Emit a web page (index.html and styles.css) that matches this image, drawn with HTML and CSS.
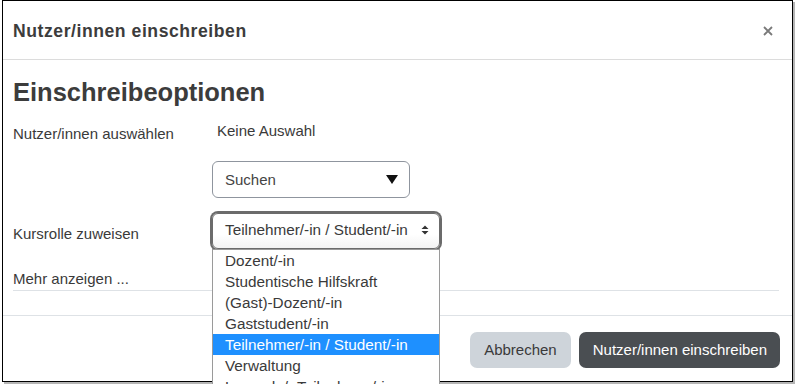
FILE: index.html
```html
<!DOCTYPE html>
<html lang="de">
<head>
<meta charset="utf-8">
<title>Nutzer/innen einschreiben</title>
<link rel="stylesheet" href="styles.css">
</head>
<body>
<div class="modal">
  <div class="modal-header">
    <h5 class="modal-title">Nutzer/innen einschreiben</h5>
    <span class="close" aria-label="Schließen">
      <svg width="10" height="10" viewBox="0 0 10 10"><path d="M1 1L9 9M9 1L1 9" stroke="#7a7a7a" stroke-width="1.8" fill="none"/></svg>
    </span>
  </div>
  <div class="modal-body">
    <h3 class="section-title">Einschreibeoptionen</h3>
    <div class="form-row row-users">
      <div class="label">Nutzer/innen auswählen</div>
      <div class="control">
        <div class="selection">Keine Auswahl</div>
        <div class="search-box">
          <span>Suchen</span>
          <svg class="down" width="12" height="9" viewBox="0 0 12 9"><path d="M0 0H12L6 9Z" fill="#111"/></svg>
        </div>
      </div>
    </div>
    <div class="form-row row-role">
      <div class="label">Kursrolle zuweisen</div>
      <div class="control">
        <div class="role-select">
          <span>Teilnehmer/-in / Student/-in</span>
          <svg class="updown" width="8" height="10" viewBox="0 0 8 10"><path d="M0.5 4H7.5L4 0.5Z M0.5 6H7.5L4 9.5Z" fill="#333"/></svg>
          <ul class="dropdown">
            <li>Dozent/-in</li>
            <li>Studentische Hilfskraft</li>
            <li>(Gast)-Dozent/-in</li>
            <li>Gaststudent/-in</li>
            <li class="selected">Teilnehmer/-in / Student/-in</li>
            <li>Verwaltung</li>
            <li>Lesende/r Teilnehmer/-in</li>
          </ul>
        </div>
      </div>
    </div>
    <div class="more">Mehr anzeigen ...</div>
  </div>
  <div class="modal-footer">
    <button class="btn btn-cancel">Abbrechen</button>
    <button class="btn btn-primary">Nutzer/innen einschreiben</button>
  </div>
</div>
</body>
</html>
```

FILE: styles.css
```css
html, body {
  margin: 0;
  padding: 0;
  height: 384px;
  overflow: hidden;
  background: #fff;
}

body {
  font-family: "Liberation Sans", Arial, sans-serif;
  font-size: 15px;
  color: #3a3a3a;
}

.modal {
  margin-left: 2px;
  width: 789px;
  height: 380px;
  border: 1px solid #000;
  background: #fff;
  box-shadow: 2px 2px 0 #b5b5b5;
  display: flex;
  flex-direction: column;
  position: relative;
}

.modal-header {
  height: 58px;
  border-bottom: 1px solid #dcdcdc;
  display: flex;
  align-items: center;
  justify-content: space-between;
  padding: 0 19px 0 10px;
}

.modal-title {
  margin: 0;
  font-size: 17.6px;
  letter-spacing: 0.55px;
  font-weight: bold;
  line-height: 22px;
  color: #3c3c3c;
  padding-top: 1px;
}

.close {
  display: flex;
  width: 10px;
  height: 10px;
  margin-top: 1px;
}

.modal-body {
  flex: 1;
  padding: 17px 13px 24px 10px;
}

.section-title {
  margin: 0;
  font-size: 25.5px;
  line-height: 30px;
  font-weight: bold;
  color: #3c3c3c;
}

.form-row {
  display: grid;
  grid-template-columns: 199px 1fr;
  line-height: 22px;
}

.row-users {
  margin-top: 13px;
}

.row-users .label {
  padding-top: 3px;
}

.selection {
  padding-left: 5px;
}

.search-box {
  margin-top: 19px;
  box-sizing: border-box;
  width: 198px;
  height: 37px;
  border: 1px solid #8f959e;
  border-radius: 6px;
  display: flex;
  align-items: center;
  justify-content: space-between;
  padding: 0 11px 0 12px;
  color: #444;
}

.row-role {
  margin-top: 15px;
}

.row-role .label {
  padding-top: 10px;
}

.role-select {
  position: relative;
  box-sizing: border-box;
  width: 228px;
  height: 36px;
  border: 1px solid #6b6b6b;
  border-radius: 6px;
  box-shadow: 0 0 0 2px #6b6b6b;
  background: linear-gradient(#fff 60%, #f3f3f3);
  display: flex;
  align-items: center;
  justify-content: space-between;
  padding: 0 10px 0 12px;
  color: #3a3a3a;
  font-size: 15.3px;
}

.role-select span {
  padding-bottom: 2px;
}

.updown {
  margin-bottom: 3px;
}

.dropdown {
  position: absolute;
  top: calc(100% + 1px);
  left: -1px;
  width: 228px;
  box-sizing: border-box;
  margin: 0;
  padding: 0;
  list-style: none;
  background: #fff;
  border: 1px solid #9a9a9a;
  z-index: 10;
}

.dropdown li {
  height: 21px;
  line-height: 21px;
  padding-left: 12px;
  color: #3a3a3a;
  white-space: nowrap;
  overflow: hidden;
}

.dropdown li.selected {
  background: #1e90ff;
  color: #fff;
}

.more {
  margin-top: 19px;
  line-height: 22px;
  border-bottom: 1px solid #dee2e6;
}

.modal-footer {
  border-top: 1px solid #dee2e6;
  padding: 16px 12px 13px;
  display: flex;
  justify-content: flex-end;
  gap: 8px;
}

.btn {
  font-family: "Liberation Sans", Arial, sans-serif;
  font-size: 15px;
  height: 36px;
  border: none;
  border-radius: 7px;
  padding: 0 14px;
  line-height: 36px;
}

.btn-cancel {
  background: #ced4da;
  color: #3a3a3a;
}

.btn-primary {
  background: #4a4e52;
  color: #fff;
  padding: 0 13px 0 14px;
}
```
